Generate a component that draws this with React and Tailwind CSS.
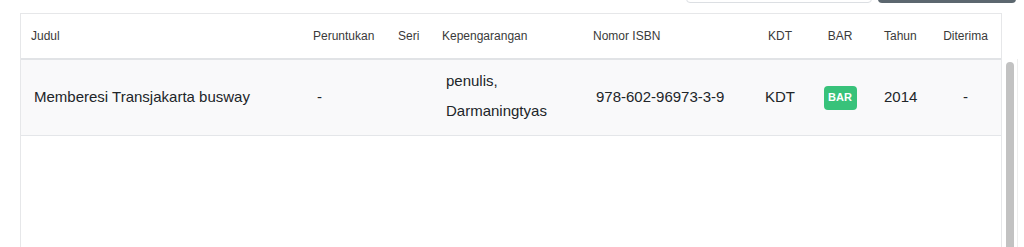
import React from "react";

const cols = "grid-cols-[280px_85px_44px_151px_169px_60px_60px_60px_71px]";

const headers = [
  { label: "Judul", cls: "pl-[10px]" },
  { label: "Peruntukan", cls: "pl-[12px]" },
  { label: "Seri", cls: "pl-[12px]" },
  { label: "Kepengarangan", cls: "pl-[12px]" },
  { label: "Nomor ISBN", cls: "pl-[12px]" },
  { label: "KDT", cls: "justify-center" },
  { label: "BAR", cls: "justify-center" },
  { label: "Tahun", cls: "pl-[14px]" },
  { label: "Diterima", cls: "justify-center" },
];

const App = () => {
  return (
    <div
      className="w-[1024px] h-[247px] bg-white overflow-hidden"
      style={{ fontFamily: '"Liberation Sans", Arial, sans-serif' }}
    >
      {/* search + button, mostly scrolled out of view */}
      <div className="flex justify-end h-[13px] pr-[8px]">
        <div className="flex gap-[6px] -mt-[27px] h-[30px]">
          <div className="w-[186px] h-full border border-[#dcdfe3] rounded-[4px] bg-white" />
          <div className="w-[138px] h-full rounded-[4px] bg-[#5c676f]" />
        </div>
      </div>

      <div className="flex pl-[20px]">
        <div className="w-[982px] h-[234px] border border-b-0 border-[#e6e7e9] flex flex-col text-[#212529]">
          {/* header */}
          <div className={`grid ${cols} h-[46px] border-b-2 border-[#e1e3e6] text-[12px] text-[#3a3a3a]`}>
            {headers.map((h) => (
              <div key={h.label} className={`flex items-center ${h.cls}`}>
                {h.label}
              </div>
            ))}
          </div>

          {/* row */}
          <div className={`grid ${cols} h-[76px] bg-[#f9f9fa] border-b border-[#e4e6e9] text-[15px]`}>
            <div className="flex items-center pl-[13px]">Memberesi Transjakarta busway</div>
            <div className="flex items-center pl-[16px]">-</div>
            <div className="flex items-center pl-[12px]"></div>
            <div className="flex flex-col justify-center pl-[16px] pb-[4px] leading-[30px]">
              <span>penulis,</span>
              <span>Darmaningtyas</span>
            </div>
            <div className="flex items-center pl-[15px]">978-602-96973-3-9</div>
            <div className="flex items-center justify-center">KDT</div>
            <div className="flex items-center justify-center">
              <span className="w-[33px] h-[24px] rounded-[4px] bg-[#38c27a] text-white text-[11px] font-bold flex items-center justify-center">
                BAR
              </span>
            </div>
            <div className="flex items-center pl-[14px]">2014</div>
            <div className="flex items-center justify-center">-</div>
          </div>

          <div className="flex-1 bg-white" />
        </div>

        {/* scrollbar */}
        <div className="w-[16px] mt-[46px] flex justify-center border-r border-[#eeeeee] pt-[3px] pl-[1px]">
          <div className="w-[8px] h-[300px] rounded-full bg-[#c2c2c2]" />
        </div>
      </div>
    </div>
  );
};

export default App;
